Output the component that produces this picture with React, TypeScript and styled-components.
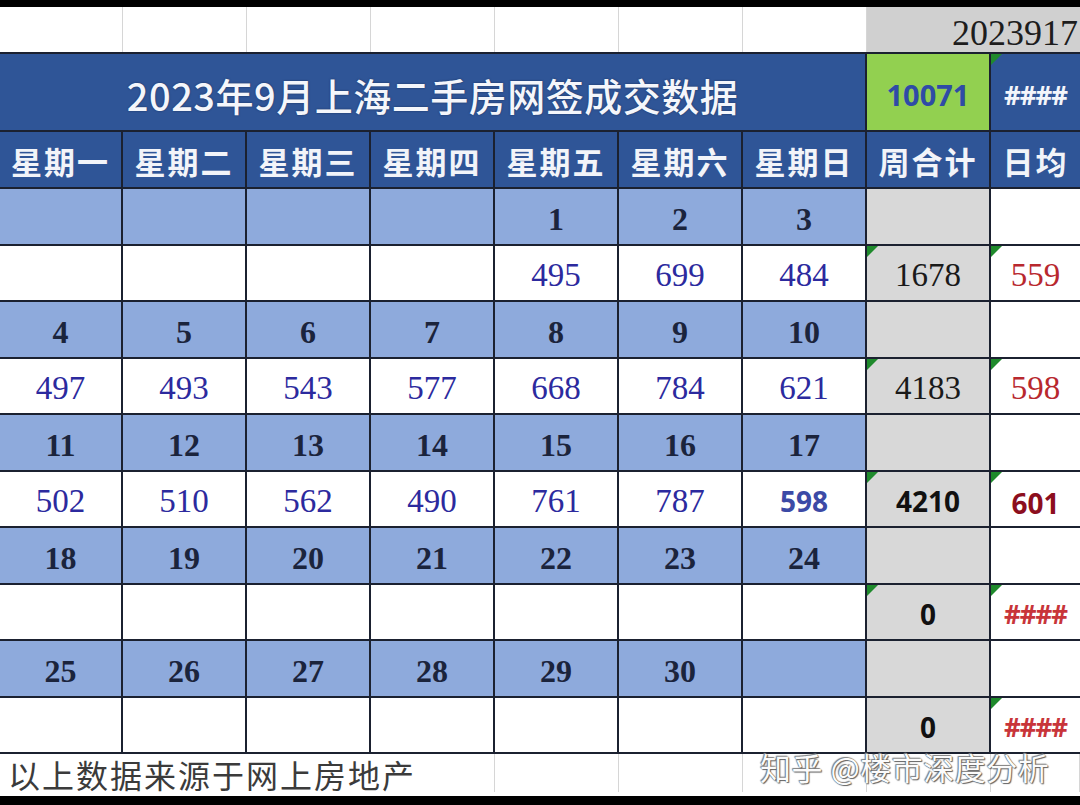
import React from "react";
import styled, { createGlobalStyle, css } from "styled-components";

const GlobalStyle = createGlobalStyle`
  html, body { margin: 0; padding: 0; background: #000; }
  #root { width: 1080px; height: 805px; }
`;

const SERIF = `"Liberation Serif", "Noto Sans CJK SC", serif`;
const SANS = `"Noto Sans", "Liberation Sans", sans-serif`;
const CJK = `"Noto Sans CJK SC", "Noto Sans", sans-serif`;

const Page = styled.div`
  position: relative;
  width: 1080px;
  height: 805px;
  background: #000;
  display: flex;
  flex-direction: column;
  overflow: hidden;
`;

const BlackBar = styled.div<{ $h: number }>`
  height: ${(p) => p.$h}px;
  flex: none;
`;

const LightRow = styled.div<{ $h: number }>`
  flex: none;
  height: ${(p) => p.$h}px;
  display: grid;
  grid-template-columns: 123px repeat(7, 124px) 1fr;
  background: #fff;
`;

const LightCell = styled.div<{ $span?: string; $gray?: boolean; $noLine?: boolean; $visible?: boolean }>`
  grid-column: ${(p) => p.$span || "auto"};
  border-right: ${(p) => (p.$noLine ? "none" : "1px solid #d6d6d6")};
  background: ${(p) => (p.$gray ? "#d0d0d0" : "#fff")};
  display: flex;
  align-items: center;
  overflow: ${(p) => (p.$visible ? "visible" : "hidden")};
  white-space: nowrap;
`;

const DateStamp = styled.div`
  margin-left: auto;
  margin-right: 2px;
  padding-top: 6px;
  font-family: ${SERIF};
  font-size: 36px;
  color: #1d1d1d;
`;

const FooterText = styled.div`
  padding-left: 8px;
  padding-top: 2px;
  font-family: ${CJK};
  font-size: 32px;
  letter-spacing: 2px;
  color: #3b3b3b;
  line-height: 1;
`;

const Table = styled.div`
  flex: none;
  display: grid;
  grid-template-columns: 121px repeat(7, 122px) 1fr;
  grid-template-rows: 76px 55px repeat(10, 54.5px);
  gap: 2px;
  background: #1b2130;
  border-top: 2px solid #1b2130;
  border-bottom: 2px solid #1b2130;
`;

type Tone = "title" | "green" | "blue" | "gray" | "white";

const toneBg: Record<Tone, string> = {
  title: "#2f5597",
  green: "#92d050",
  blue: "#8eaadc",
  gray: "#d8d8d8",
  white: "#ffffff",
};

const Cell = styled.div<{ $tone: Tone; $span?: string; $flag?: boolean }>`
  position: relative;
  grid-column: ${(p) => p.$span || "auto"};
  background: ${(p) => toneBg[p.$tone]};
  display: flex;
  align-items: center;
  justify-content: center;
  overflow: hidden;
  white-space: nowrap;
  ${(p) =>
    p.$flag &&
    css`
      &::before {
        content: "";
        position: absolute;
        left: 0;
        top: 0;
        width: 0;
        height: 0;
        border-top: 11px solid #1f8a2c;
        border-right: 11px solid transparent;
      }
    `}
`;

const Title = styled.div`
  font-family: ${CJK};
  font-size: 38px;
  font-weight: 500;
  color: #f4f6fb;
  letter-spacing: 0.5px;
  text-shadow: 0 0 2px rgba(10, 20, 50, 0.6);
  padding-top: 4px;
`;

const HeadText = styled.div`
  font-family: ${CJK};
  font-size: 31px;
  font-weight: 700;
  color: #f2f4f9;
  letter-spacing: 2px;
  padding-top: 2px;
`;

type NumKind = "day" | "val" | "total" | "avg" | "sansBlue" | "sansBlack" | "sansRed" | "hashRed" | "hashWhite" | "green";

const numStyles: Record<NumKind, ReturnType<typeof css>> = {
  day: css`font-family: ${SERIF}; font-weight: 700; color: #1b243c; font-size: 32px;`,
  val: css`font-family: ${SERIF}; color: #2c2a9e; font-size: 33px;`,
  total: css`font-family: ${SERIF}; color: #1a1a1a; font-size: 33px;`,
  avg: css`font-family: ${SERIF}; color: #b8282e; font-size: 33px;`,
  sansBlue: css`font-family: ${SANS}; font-weight: 700; color: #3c4aa6; font-size: 28px;`,
  sansBlack: css`font-family: ${SANS}; font-weight: 700; color: #111; font-size: 28px;`,
  sansRed: css`font-family: ${SANS}; font-weight: 700; color: #8c0e1e; font-size: 28px; padding-top: 8px;`,
  hashRed: css`font-family: ${SANS}; font-weight: 700; color: #c8353a; font-size: 26px; letter-spacing: -1px;`,
  hashWhite: css`font-family: ${SANS}; font-weight: 700; color: #f3f5fb; font-size: 26px; letter-spacing: -1px;`,
  green: css`font-family: ${SANS}; font-weight: 700; color: #2f4ba6; font-size: 29px;`,
};

const Num = styled.span<{ $kind: NumKind }>`
  line-height: 1;
  padding-top: 5px;
  ${(p) => numStyles[p.$kind]}
`;

const Watermark = styled.div`
  position: absolute;
  left: 760px;
  top: 744px;
  font-family: ${CJK};
  font-size: 31px;
  color: #fbfbfb;
  letter-spacing: 0.5px;
  text-shadow: 0 0 1px #444, 1px 1px 1px #666, -1px -1px 1px #888;
  white-space: nowrap;
  pointer-events: none;
`;

type Week = {
  days: (number | "")[];
  vals: (number | "")[];
  valKinds?: NumKind[];
  total: { text: string; kind: NumKind; flag: boolean };
  avg: { text: string; kind: NumKind; flag: boolean };
};

const weeks: Week[] = [
  {
    days: ["", "", "", "", 1, 2, 3],
    vals: ["", "", "", "", 495, 699, 484],
    total: { text: "1678", kind: "total", flag: true },
    avg: { text: "559", kind: "avg", flag: true },
  },
  {
    days: [4, 5, 6, 7, 8, 9, 10],
    vals: [497, 493, 543, 577, 668, 784, 621],
    total: { text: "4183", kind: "total", flag: true },
    avg: { text: "598", kind: "avg", flag: true },
  },
  {
    days: [11, 12, 13, 14, 15, 16, 17],
    vals: [502, 510, 562, 490, 761, 787, 598],
    valKinds: ["val", "val", "val", "val", "val", "val", "sansBlue"],
    total: { text: "4210", kind: "sansBlack", flag: true },
    avg: { text: "601", kind: "sansRed", flag: true },
  },
  {
    days: [18, 19, 20, 21, 22, 23, 24],
    vals: ["", "", "", "", "", "", ""],
    total: { text: "0", kind: "sansBlack", flag: true },
    avg: { text: "####", kind: "hashRed", flag: true },
  },
  {
    days: [25, 26, 27, 28, 29, 30, ""],
    vals: ["", "", "", "", "", "", ""],
    total: { text: "0", kind: "sansBlack", flag: false },
    avg: { text: "####", kind: "hashRed", flag: true },
  },
];

const headers = ["星期一", "星期二", "星期三", "星期四", "星期五", "星期六", "星期日", "周合计", "日均"];

export default function App() {
  return (
    <Page>
      <GlobalStyle />
      <BlackBar $h={7} />
      <LightRow $h={45}>
        {Array.from({ length: 7 }).map((_, i) => (
          <LightCell key={i} />
        ))}
        <LightCell $span="8 / -1" $gray $noLine>
          <DateStamp>2023917</DateStamp>
        </LightCell>
      </LightRow>
      <Table>
        <Cell $tone="title" $span="1 / 8">
          <Title>2023年9月上海二手房网签成交数据</Title>
        </Cell>
        <Cell $tone="green">
          <Num $kind="green">10071</Num>
        </Cell>
        <Cell $tone="title" $flag>
          <Num $kind="hashWhite">####</Num>
        </Cell>
        {headers.map((h) => (
          <Cell key={h} $tone="title">
            <HeadText>{h}</HeadText>
          </Cell>
        ))}
        {weeks.map((w, wi) => (
          <React.Fragment key={wi}>
            {w.days.map((d, i) => (
              <Cell key={`d${i}`} $tone="blue">
                {d !== "" && <Num $kind="day">{d}</Num>}
              </Cell>
            ))}
            <Cell $tone="gray" />
            <Cell $tone="white" />
            {w.vals.map((v, i) => (
              <Cell key={`v${i}`} $tone="white">
                {v !== "" && <Num $kind={w.valKinds ? w.valKinds[i] : "val"}>{v}</Num>}
              </Cell>
            ))}
            <Cell $tone="gray" $flag={w.total.flag}>
              <Num $kind={w.total.kind}>{w.total.text}</Num>
            </Cell>
            <Cell $tone="white" $flag={w.avg.flag}>
              <Num $kind={w.avg.kind}>{w.avg.text}</Num>
            </Cell>
          </React.Fragment>
        ))}
      </Table>
      <LightRow $h={42}>
        <LightCell $span="1 / 5" $visible>
          <FooterText>以上数据来源于网上房地产</FooterText>
        </LightCell>
        <LightCell />
        <LightCell />
        <LightCell />
        <LightCell />
        <LightCell />
        <LightCell $noLine />
      </LightRow>
      <BlackBar $h={9} />
      <Watermark>知乎 @楼市深度分析</Watermark>
    </Page>
  );
}
